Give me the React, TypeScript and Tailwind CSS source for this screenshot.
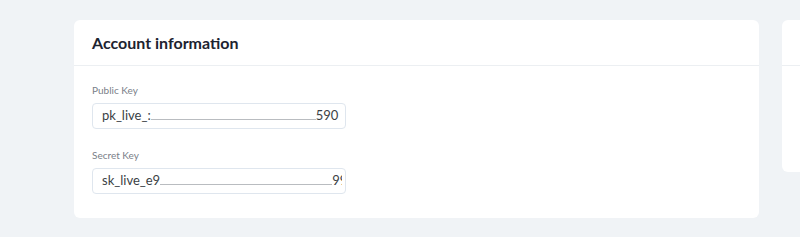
const FONT = { fontFamily: 'Lato, "Open Sans", sans-serif' }

interface KeyFieldProps {
  label: string
  prefix: string
  suffix: string
  lineWidth: string
}

function KeyField({ label, prefix, suffix, lineWidth }: KeyFieldProps) {
  return (
    <div className="flex flex-col">
      <span className="text-[10px] leading-[12px] text-[#7a8088]">{label}</span>
      <div className="mt-[7px] w-[254px] h-[26px] rounded-[4px] border border-[#dfe6ee] bg-white flex items-center pl-[9px] pr-[3px]">
        <div className="flex-1 overflow-hidden flex items-baseline whitespace-nowrap text-[13px] text-[#3b3f45]">
          <span>{prefix}</span>
          <span className={`${lineWidth} shrink-0 h-[12px] border-b border-[#b9bcc0]`} />
          <span>{suffix}</span>
        </div>
      </div>
    </div>
  )
}

export default function App() {
  return (
    <div className="w-[800px] h-[237px] bg-[#f0f3f6] overflow-hidden" style={FONT}>
      <div className="flex gap-[23px] pt-[20px] pl-[74px]">
        <div className="w-[685px] h-[198px] shrink-0 bg-white rounded-[6px] flex flex-col">
          <div className="h-[46px] border-b border-[#eceff2] flex items-center px-[18px]">
            <h2 className="text-[16px] font-bold text-[#1d2330]">Account information</h2>
          </div>
          <div className="flex flex-col gap-[20px] pt-[18px] px-[18px]">
            <KeyField label="Public Key" prefix="pk_live_:" suffix="590" lineWidth="w-[165px]" />
            <KeyField label="Secret Key" prefix="sk_live_e9" suffix="99" lineWidth="w-[172px]" />
          </div>
        </div>
        <div className="w-[200px] h-[152px] shrink-0 bg-white rounded-[6px] flex flex-col">
          <div className="h-[46px] border-b border-[#eceff2]" />
        </div>
      </div>
    </div>
  )
}
